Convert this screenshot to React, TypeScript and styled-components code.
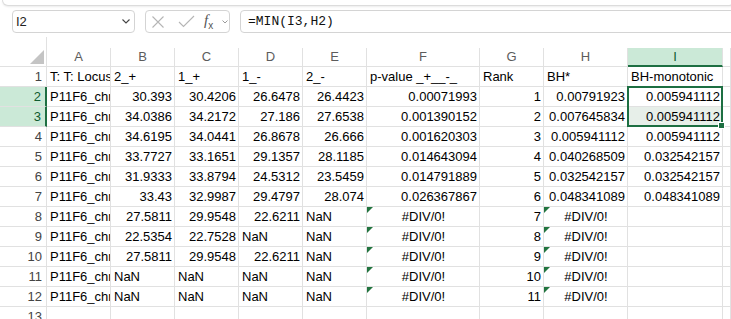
import styled, { createGlobalStyle } from "styled-components";

const GREEN = "#1d6f42";
const GRID = "#e1e1e1";

const COLS = ["A", "B", "C", "D", "E", "F", "G", "H", "I", ""];

const ROWS: string[][] = [
  ["T: T: Locus", "2_+", "1_+", "1_-", "2_-", "p-value _+__-_", "Rank", "BH*", "BH-monotonic"],
  ["P11F6_chr1_4410", "30.393", "30.4206", "26.6478", "26.4423", "0.00071993", "1", "0.00791923", "0.005941112"],
  ["P11F6_chr1_5522", "34.0386", "34.2172", "27.186", "27.6538", "0.001390152", "2", "0.007645834", "0.005941112"],
  ["P11F6_chr2_1187", "34.6195", "34.0441", "26.8678", "26.666", "0.001620303", "3", "0.005941112", "0.005941112"],
  ["P11F6_chr2_3309", "33.7727", "33.1651", "29.1357", "28.1185", "0.014643094", "4", "0.040268509", "0.032542157"],
  ["P11F6_chr3_0712", "31.9333", "33.8794", "24.5312", "23.5459", "0.014791889", "5", "0.032542157", "0.032542157"],
  ["P11F6_chr3_2250", "33.43", "32.9987", "29.4797", "28.074", "0.026367867", "6", "0.048341089", "0.048341089"],
  ["P11F6_chr4_0091", "27.5811", "29.9548", "22.6211", "NaN", "#DIV/0!", "7", "#DIV/0!", ""],
  ["P11F6_chr4_1830", "22.5354", "22.7528", "NaN", "NaN", "#DIV/0!", "8", "#DIV/0!", ""],
  ["P11F6_chr5_0404", "27.5811", "29.9548", "22.6211", "NaN", "#DIV/0!", "9", "#DIV/0!", ""],
  ["P11F6_chr5_2977", "NaN", "NaN", "NaN", "NaN", "#DIV/0!", "10", "#DIV/0!", ""],
  ["P11F6_chr6_1145", "NaN", "NaN", "NaN", "NaN", "#DIV/0!", "11", "#DIV/0!", ""],
  ["", "", "", "", "", "", "", "", ""],
];

type Align = "left" | "right" | "center";

const alignOf = (v: string, row: number): Align => {
  if (row === 0) return "left";
  if (v.startsWith("#")) return "center";
  if (v !== "" && v !== "NaN" && !isNaN(Number(v))) return "right";
  return "left";
};

const GlobalStyle = createGlobalStyle`
  html, body {
    margin: 0;
    padding: 0;
    background: #fff;
  }
  body {
    font-family: "Liberation Sans", Arial, sans-serif;
    overflow: hidden;
  }
`;

const App = () => {
  return (
    <Window>
      <GlobalStyle />
      <RibbonEdge />
      <FormulaBar>
        <NameBox>
          <span>I2</span>
          <svg width="8" height="5" viewBox="0 0 8 5">
            <path d="M0.5 0.5 L4 4 L7.5 0.5" fill="none" stroke="#444" strokeWidth="1.1" />
          </svg>
        </NameBox>
        <FxBox>
          <svg width="14" height="14" viewBox="0 0 14 14">
            <path d="M1.5 1.5 L12.5 12.5 M12.5 1.5 L1.5 12.5" stroke="#b5b5b5" strokeWidth="1.1" />
          </svg>
          <svg width="17" height="13" viewBox="0 0 17 13">
            <path d="M1 7 L5.5 11.5 L16 1" fill="none" stroke="#b5b5b5" strokeWidth="1.1" />
          </svg>
          <FxLabel>
            <i>f</i>
            <sub>x</sub>
          </FxLabel>
          <svg width="6" height="4" viewBox="0 0 6 4">
            <path d="M0.5 0.5 L3 3 L5.5 0.5" fill="none" stroke="#9a9a9a" strokeWidth="1" />
          </svg>
        </FxBox>
        <FormulaInput>=MIN(I3,H2)</FormulaInput>
      </FormulaBar>

      <Sheet>
        <SpacerHead />
        <SpacerRest />

        <Corner>
          <svg width="14" height="14" viewBox="0 0 14 14">
            <path d="M14 0 L14 14 L0 14 Z" fill="#c4c4c4" />
          </svg>
        </Corner>
        {COLS.map((c, i) => (
          <ColHeader key={i} $selected={c === "I"}>
            {c}
          </ColHeader>
        ))}

        {ROWS.map((row, r) => (
          <Row key={r} row={row} r={r} />
        ))}
      </Sheet>
    </Window>
  );
};

const Row = ({ row, r }: { row: string[]; r: number }) => {
  const num = r + 1;
  return (
    <>
      <RowHeader $selected={num === 2 || num === 3}>{num}</RowHeader>
      {row.map((v, c) => (
        <Cell key={c} $shaded={num === 3 && c === 8}>
          {v.startsWith("#") && <ErrorFlag />}
          <CellText $align={alignOf(v, r)}>{v}</CellText>
          {num === 2 && c === 8 && (
            <SelectionFrame>
              <FillHandle />
            </SelectionFrame>
          )}
        </Cell>
      ))}
      <Cell $shaded={false} />
    </>
  );
};

export default App;

const Window = styled.div`
  width: 731px;
  height: 319px;
  overflow: hidden;
  display: flex;
  flex-direction: column;
  background: #fff;
`;

const RibbonEdge = styled.div`
  height: 5px;
  margin: 0 -4px 0 2px;
  background: #fff;
  border: 1px solid #dcdcdc;
  border-top: none;
  border-radius: 0 0 8px 8px;
  box-shadow: 0 1px 2px rgba(0, 0, 0, 0.08);
  flex-shrink: 0;
`;

const FormulaBar = styled.div`
  height: 31px;
  display: flex;
  align-items: center;
  padding-left: 12px;
  overflow: hidden;
  flex-shrink: 0;
`;

const boxBase = `
  height: 23px;
  box-sizing: border-box;
  border: 1px solid #d4d4d4;
  border-radius: 4px;
  background: #fff;
  display: flex;
  align-items: center;
`;

const NameBox = styled.div`
  ${boxBase}
  width: 123px;
  padding: 0 4px 0 3px;
  justify-content: space-between;
  font-size: 13px;
  color: #222;
`;

const FxBox = styled.div`
  ${boxBase}
  width: 85px;
  margin-left: 10px;
  padding-left: 5px;

  svg:nth-of-type(1) {
    margin-right: 13px;
  }
  svg:nth-of-type(2) {
    margin-right: 9px;
  }
`;

const FxLabel = styled.span`
  font-family: "Liberation Serif", "Times New Roman", serif;
  font-size: 15px;
  color: #555;
  width: 12px;
  margin-right: 6px;
  line-height: 1;

  sub {
    font-size: 10px;
    font-style: normal;
    font-family: "Liberation Sans", Arial, sans-serif;
  }
`;

const FormulaInput = styled.div`
  ${boxBase}
  flex: 1 0 auto;
  margin-left: 10px;
  margin-right: -10px;
  padding-left: 7px;
  font-family: "Liberation Mono", "Courier New", monospace;
  font-size: 13px;
  color: #111;
`;

const Sheet = styled.div`
  display: grid;
  grid-template-columns: 47px 64px 64px 64px 64px 64px 113px 64px 84px 95px 1fr;
  grid-template-rows: 11px 19px repeat(13, 20px);
  font-size: 13px;
  color: #000;
`;

const SpacerHead = styled.div`
  border-right: 1px solid ${GRID};
`;

const SpacerRest = styled.div`
  grid-column: 2 / -1;
`;

const Corner = styled.div`
  border-right: 1px solid ${GRID};
  border-bottom: 1px solid ${GRID};
  display: flex;
  justify-content: flex-end;
  align-items: flex-end;
  padding: 0 2px 2px 0;
`;

const ColHeader = styled.div<{ $selected: boolean }>`
  border-right: 1px solid ${GRID};
  border-bottom: ${({ $selected }) => ($selected ? `2px solid ${GREEN}` : `1px solid ${GRID}`)};
  background: ${({ $selected }) => ($selected ? "#cbe9d7" : "#fff")};
  color: ${({ $selected }) => ($selected ? "#0f5a30" : "#5c5c5c")};
  text-align: center;
  line-height: 18px;
`;

const RowHeader = styled.div<{ $selected: boolean }>`
  border-right: ${({ $selected }) => ($selected ? `2px solid ${GREEN}` : `1px solid ${GRID}`)};
  border-bottom: 1px solid ${GRID};
  background: ${({ $selected }) => ($selected ? "#cbe9d7" : "#fff")};
  color: ${({ $selected }) => ($selected ? "#0f5a30" : "#444")};
  text-align: right;
  padding: 3px 4px 0 0;
  line-height: 14px;
`;

const Cell = styled.div<{ $shaded: boolean }>`
  position: relative;
  min-width: 0;
  border-right: 1px solid ${GRID};
  border-bottom: 1px solid ${GRID};
  background: ${({ $shaded }) => ($shaded ? "#e7efe9" : "#fff")};
`;

const CellText = styled.div<{ $align: Align }>`
  text-align: ${({ $align }) => $align};
  padding: 3px 2px 0 3px;
  line-height: 14px;
  white-space: nowrap;
  overflow: hidden;
`;

const ErrorFlag = styled.span`
  position: absolute;
  left: 0;
  top: 0;
  width: 0;
  height: 0;
  border-top: 6px solid #22743f;
  border-right: 6px solid transparent;
`;

const SelectionFrame = styled.div`
  position: absolute;
  z-index: 2;
  left: -1px;
  top: -1px;
  width: 96px;
  height: 41px;
  box-sizing: border-box;
  border: 2px solid ${GREEN};
  pointer-events: none;
`;

const FillHandle = styled.span`
  position: absolute;
  right: -4px;
  bottom: -4px;
  width: 5px;
  height: 5px;
  background: ${GREEN};
  border: 1px solid #fff;
`;
